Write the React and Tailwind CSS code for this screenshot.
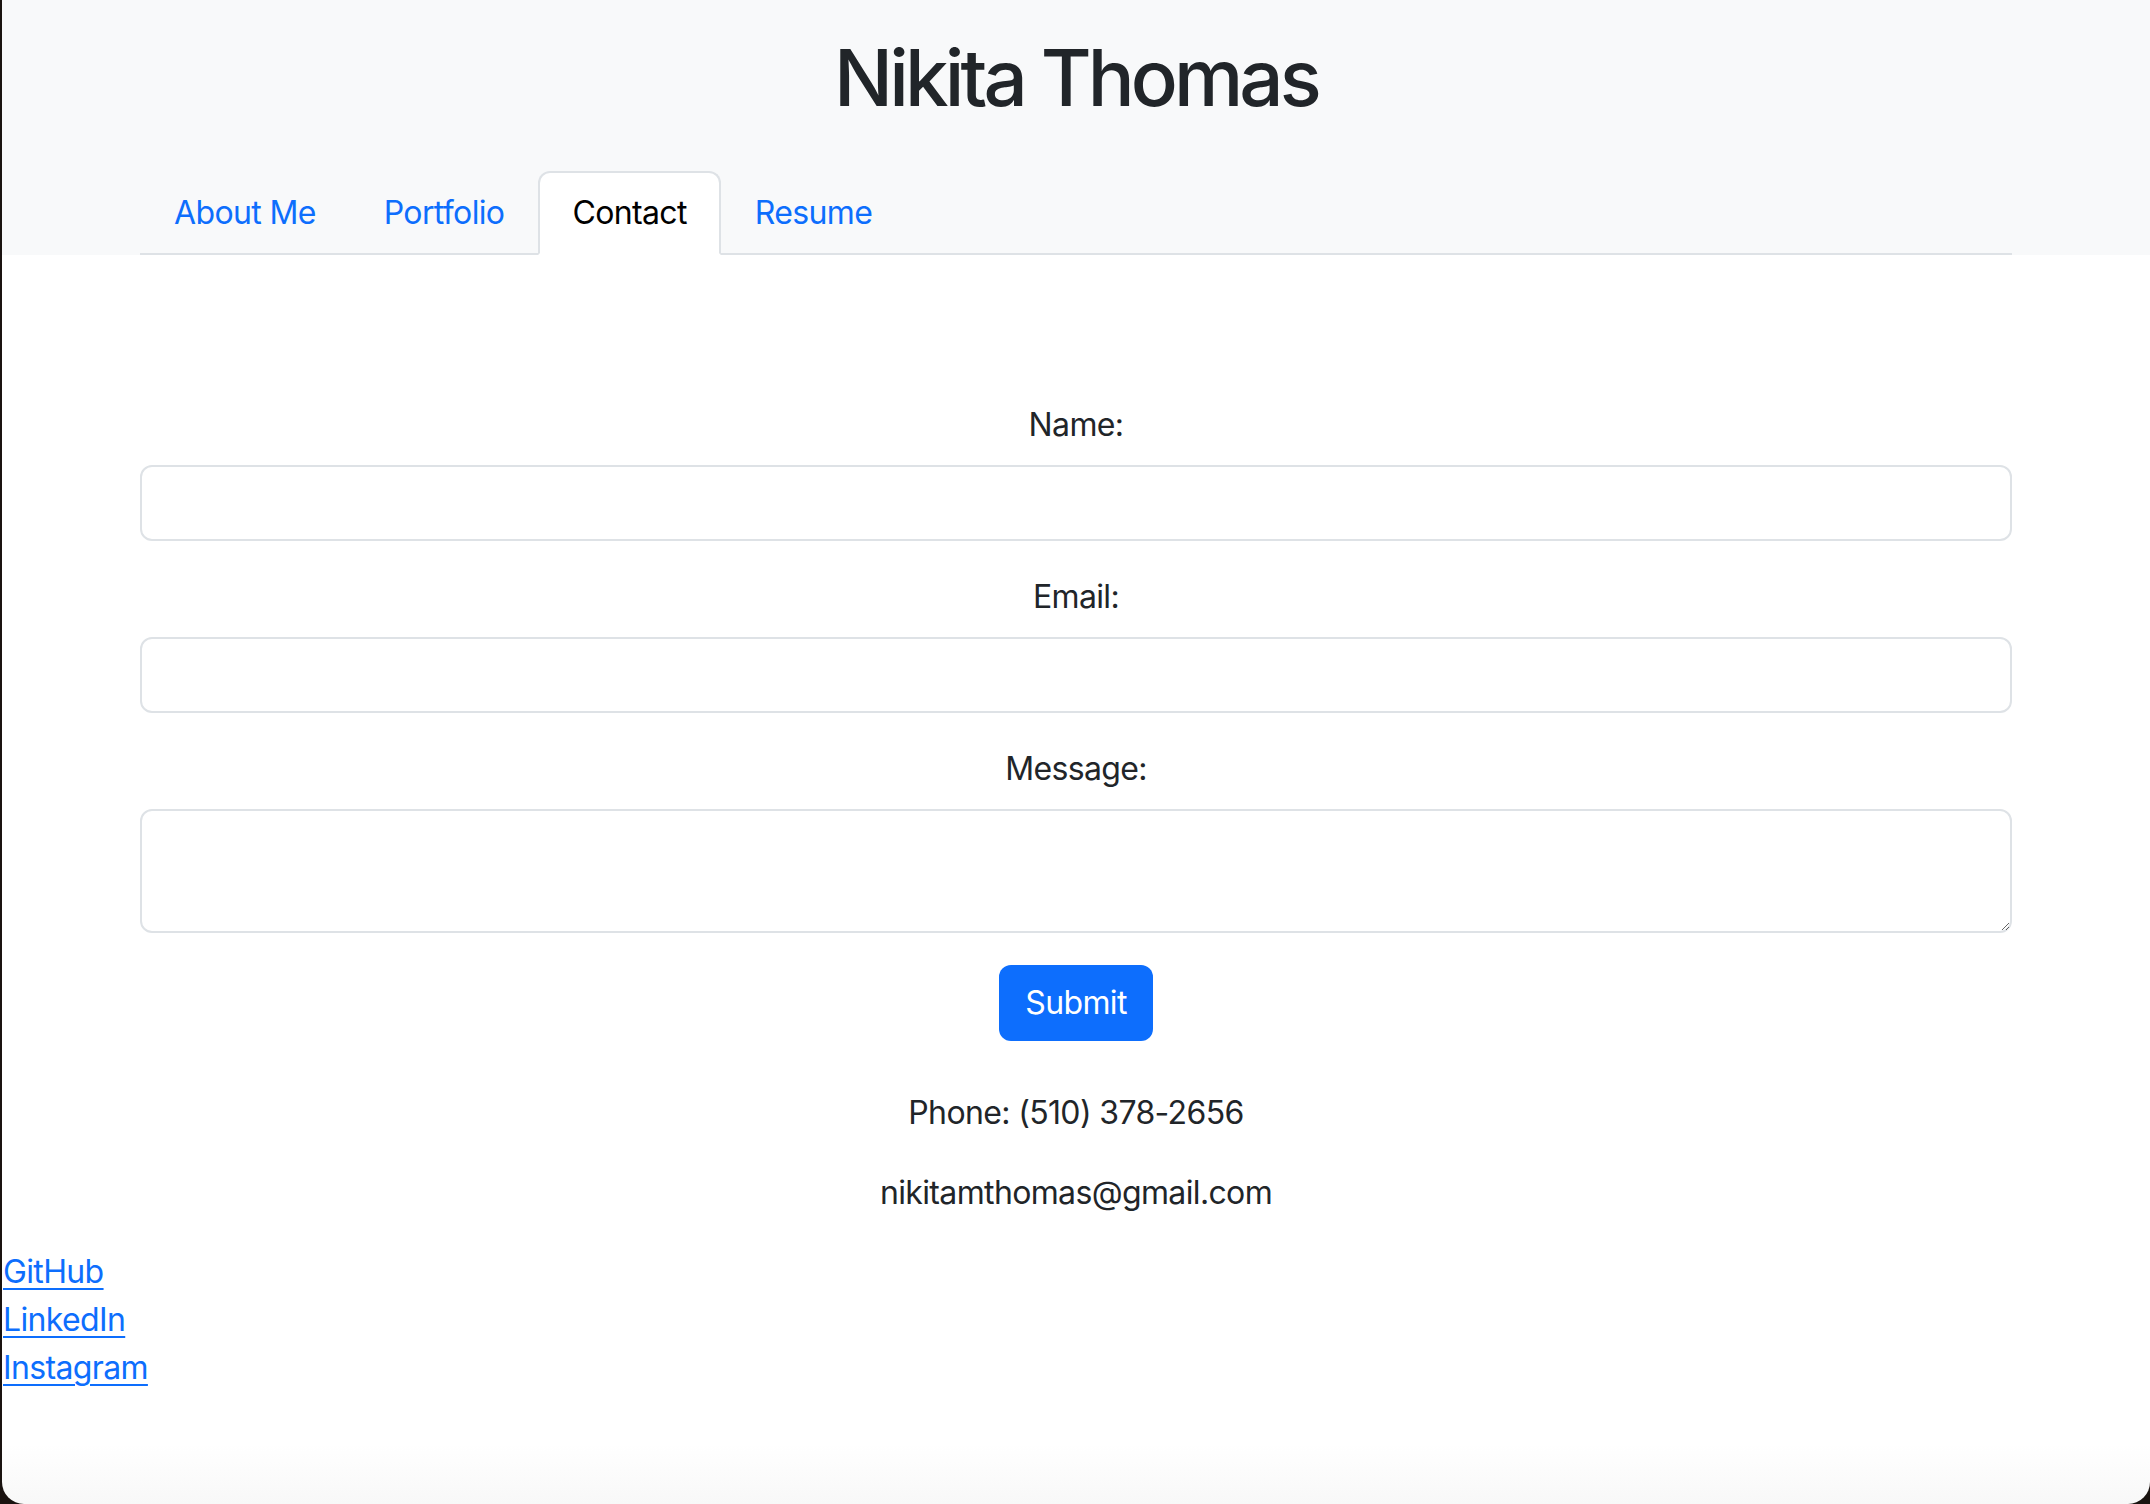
const TABS = ["About Me", "Portfolio", "Contact", "Resume"];
const ACTIVE = "Contact";

const LINKS = ["GitHub", "LinkedIn", "Instagram"];

function Field({ label, textarea }) {
  return (
    <div className="mb-[32px]">
      <label className="mb-[16px] block text-center">{label}</label>
      {textarea ? (
        <textarea
          rows={2}
          className="block h-[124px] w-full rounded-[12px] border-2 border-[#dee2e6] bg-white px-[24px] py-[12px] outline-none"
        />
      ) : (
        <input
          type="text"
          className="block h-[76px] w-full rounded-[12px] border-2 border-[#dee2e6] bg-white px-[24px] outline-none"
        />
      )}
    </div>
  );
}

export default function App() {
  return (
    <div className="flex h-screen bg-[#1a1310] font-['Inter',sans-serif] text-[32px] leading-[48px] tracking-[-0.02em] text-[#212529]">
      <div className="ml-[2px] flex flex-1 flex-col overflow-hidden rounded-b-[22px] bg-linear-to-b from-white from-[96%] to-[#f8f8f8]">
        {/* header + tabs */}
        <header className="bg-[#f8f9fa] pt-[30px]">
          <h1 className="text-center text-[78px] font-medium leading-[96px] tracking-[-0.05em]">
            Nikita Thomas
          </h1>
          <ul className="mx-auto mt-[45px] flex w-[1872px] border-b-2 border-[#dee2e6]">
            {TABS.map((t) => (
              <li key={t} className="-mb-[2px]">
                <a
                  href="#"
                  className={
                    t === ACTIVE
                      ? "block rounded-t-[12px] border-2 border-[#dee2e6] border-b-white bg-white px-[32px] py-[16px] text-black"
                      : "block rounded-t-[12px] border-2 border-transparent px-[32px] py-[16px] text-[#0d6efd]"
                  }
                >
                  {t}
                </a>
              </li>
            ))}
          </ul>
        </header>

        {/* contact form */}
        <main className="mx-auto w-[1872px] pt-[146px]">
          <form onSubmit={(e) => e.preventDefault()}>
            <Field label="Name:" />
            <Field label="Email:" />
            <Field label="Message:" textarea />
            <div className="flex justify-center">
              <button
                type="submit"
                className="h-[76px] rounded-[12px] bg-[#0d6efd] px-[26px] text-white"
              >
                Submit
              </button>
            </div>
          </form>
          <p className="mt-[48px] text-center">Phone: (510) 378-2656</p>
          <p className="mt-[32px] text-center">nikitamthomas@gmail.com</p>
        </main>

        <div className="mt-[31px] pl-[1px]">
          {LINKS.map((l) => (
            <a
              key={l}
              href="#"
              className="block w-fit text-[#0d6efd] underline decoration-2 underline-offset-[5px]"
            >
              {l}
            </a>
          ))}
        </div>
      </div>
    </div>
  );
}
